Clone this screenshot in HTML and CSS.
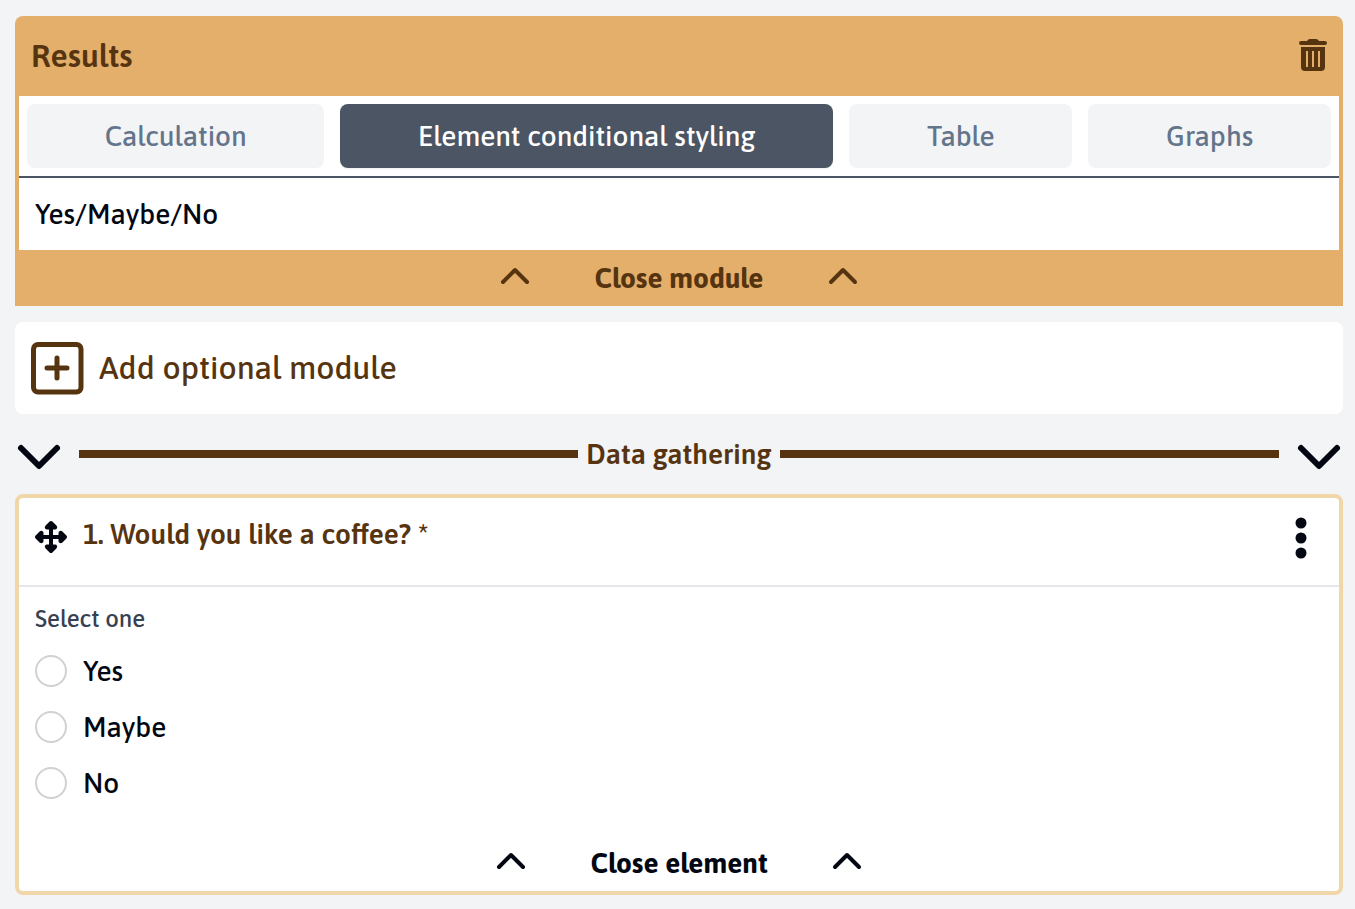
FILE: index.html
```
<!DOCTYPE html>
<html lang="en">
<head>
  <meta charset="UTF-8">
  <title>Survey editor</title>
  <meta name="viewport" content="width=device-width, initial-scale=1.0">
  <link rel="stylesheet" href="styles.css">
</head>
<body>
  <section class="module">
    <header class="module-header">
      <h2>Results</h2>
      <button type="button" class="icon-btn" aria-label="Delete module">
        <svg width="28" height="34" viewBox="0 0 28 34" fill="currentColor">
          <path d="M2 2H8Q9 0 11 0H17Q19 0 20 2H26Q28 2 28 4T26 6H2Q0 6 0 4T2 2Z"/>
          <path fill-rule="evenodd" d="M2 8H26V28Q26 32 22 32H6Q2 32 2 28ZM7 12V28H9V12ZM13 12V28H15V12ZM19 12V28H21V12Z"/>
        </svg>
      </button>
    </header>
    <div class="module-body">
      <nav class="tabs">
        <button type="button" class="tab">Calculation</button>
        <button type="button" class="tab active">Element conditional styling</button>
        <button type="button" class="tab">Table</button>
        <button type="button" class="tab">Graphs</button>
      </nav>
      <p class="module-row">Yes/Maybe/No</p>
    </div>
    <button type="button" class="close-btn">
      <svg width="32" height="32" viewBox="0 0 32 32"><path class="stroke" d="M4 20 16 8 28 20"/></svg>
      <span>Close module</span>
      <svg width="32" height="32" viewBox="0 0 32 32"><path class="stroke" d="M4 20 16 8 28 20"/></svg>
    </button>
  </section>

  <button type="button" class="add-module">
    <svg width="52" height="52" viewBox="0 0 52 52">
      <rect class="box" x="2.500" y="2.500" width="47.500" height="47.500" rx="4.500"/>
      <path class="plus" d="M16 26H36M26 16V36"/>
    </svg>
    <span>Add optional module</span>
  </button>

  <div class="divider">
    <button type="button" class="icon-btn" aria-label="Collapse section">
      <svg width="48" height="48" viewBox="0 0 48 48"><path class="stroke" d="M6 18 24 36 42 18"/></svg>
    </button>
    <div class="divider-title">
      <h3>Data gathering</h3>
    </div>
    <button type="button" class="icon-btn" aria-label="Collapse section">
      <svg width="48" height="48" viewBox="0 0 48 48"><path class="stroke" d="M6 18 24 36 42 18"/></svg>
    </button>
  </div>

  <section class="element">
    <header class="element-header">
      <button type="button" class="icon-btn drag-handle" aria-label="Move element">
        <svg width="32" height="32" viewBox="0 0 32 32" fill="currentColor">
          <path d="M14.600 .6Q16-.6 17.400 .6L21.400 4.600Q22.600 6 22 7.200Q21.400 8.500 20 8.500H18V14H23.500V12Q23.500 10.600 24.800 10Q26.200 9.500 27.400 10.600L31.400 14.600Q32.600 16 31.400 17.400L27.400 21.400Q26.200 22.500 24.800 22Q23.500 21.400 23.500 20V18H18V23.500H20Q21.400 23.500 22 24.800Q22.600 26 21.400 27.400L17.400 31.400Q16 32.600 14.600 31.400L10.600 27.400Q9.400 26 10 24.800Q10.600 23.500 12 23.500H14V18H8.500V20Q8.500 21.400 7.200 22Q5.800 22.500 4.600 21.400L.6 17.400Q-.6 16 .6 14.600L4.600 10.600Q5.800 9.500 7.200 10Q8.500 10.600 8.500 12V14H14V8.500H12Q10.600 8.500 10 7.200Q9.400 6 10.600 4.600Z"/>
        </svg>
      </button>
      <h3>1. Would you like a coffee? *</h3>
      <button type="button" class="icon-btn" aria-label="Element options">
        <svg width="44" height="44" viewBox="0 0 44 44" fill="currentColor">
          <circle cx="22" cy="7" r="5.500"/>
          <circle cx="22" cy="22" r="5.500"/>
          <circle cx="22" cy="37" r="5.500"/>
        </svg>
      </button>
    </header>
    <fieldset class="options">
      <legend>Select one</legend>
      <label class="option"><input type="radio" name="coffee" value="yes">Yes</label>
      <label class="option"><input type="radio" name="coffee" value="maybe">Maybe</label>
      <label class="option"><input type="radio" name="coffee" value="no">No</label>
    </fieldset>
    <button type="button" class="close-btn">
      <svg width="32" height="32" viewBox="0 0 32 32"><path class="stroke" d="M4 20 16 8 28 20"/></svg>
      <span>Close element</span>
      <svg width="32" height="32" viewBox="0 0 32 32"><path class="stroke" d="M4 20 16 8 28 20"/></svg>
    </button>
  </section>
</body>
</html>
```
FILE: styles.css
```
* {
  box-sizing: border-box;
}
body {
  margin: 0;
  padding: 16px 12px 14px 15px;
  font-family: Asap, Roboto, sans-serif;
  font-size: 28px;
  font-weight: 500;
  line-height: 40px;
  background: #f3f4f6;
  color: #030712;
}
h2, h3, p {
  margin: 0;
}
button {
  font: inherit;
  color: inherit;
  background: none;
  border: none;
  padding: 0;
  cursor: pointer;
}
svg {
  display: block;
}
.icon-btn {
  flex: none;
}
.stroke {
  fill: none;
  stroke: currentColor;
  stroke-width: 4;
  stroke-linecap: round;
  stroke-linejoin: round;
}
/* Results module */
.module {
  background: #e3af6b;
  color: #573410;
  border-radius: 8px 8px 0 0;
}
.module-header {
  display: flex;
  justify-content: space-between;
  align-items: center;
  height: 80px;
  padding: 0 16px;
}
.module-header h2 {
  font-size: 32px;
  font-weight: 600;
}
.module-body {
  margin: 0 4px;
  background: #fff;
  color: #030712;
}
.tabs {
  display: flex;
  gap: 16px;
  padding: 8px;
  border-bottom: 2px solid #4b5563;
}
.tab {
  flex: 1 1 auto;
  height: 64px;
  border-radius: 8px;
  background: #f3f4f6;
  color: #64748b;
}
.tab.active {
  background: #4b5563;
  color: #fff;
  box-shadow: 0 1px 2px #0001;
}
.module-row {
  padding: 16px;
}
.close-btn {
  display: flex;
  justify-content: center;
  align-items: center;
  gap: 64px;
  width: 100%;
  height: 56px;
  font-weight: 700;
}
/* Add module */
.add-module {
  display: flex;
  align-items: center;
  gap: 16px;
  width: 100%;
  margin-top: 16px;
  padding: 20px 16px;
  border-radius: 8px;
  background: #fff;
  color: #573410;
  font-size: 32px;
}
.add-module svg {
  overflow: visible;
}
.add-module .box, .add-module .plus {
  fill: none;
  stroke: currentColor;
  stroke-width: 5;
  stroke-linecap: round;
}
/* Section divider */
.divider {
  display: flex;
  align-items: center;
  gap: 16px;
  height: 80px;
}
.divider .stroke {
  stroke-width: 6;
}
.divider-title {
  flex: 1;
  display: flex;
  align-items: center;
  gap: 8px;
  color: #573410;
}
.divider-title::before, .divider-title::after {
  content: "";
  flex: 1;
  height: 8px;
  background: #573410;
}
.divider-title h3 {
  font-size: 28px;
  font-weight: 600;
}
/* Question element */
.element {
  border: 4px solid #f1d6a9;
  border-radius: 8px;
  background: #fff;
}
.element-header {
  display: flex;
  align-items: flex-start;
  gap: 16px;
  padding: 16px 16px 25px;
  border-bottom: 2px solid #e5e7eb;
}
.element-header .icon-btn {
  padding-top: 2px;
}
.element-header .drag-handle {
  padding-top: 7px;
}
.element-header h3 {
  flex: 1;
  color: #573410;
  font-size: 28px;
  font-weight: 600;
}
.options {
  margin: 0;
  padding: 12px 16px 24px;
  border: none;
}
.options legend {
  float: left;
  width: 100%;
  margin-bottom: 4px;
  padding: 0;
  font-size: 24px;
  color: #374151;
}
.option {
  display: flex;
  align-items: center;
  gap: 16px;
  clear: both;
  height: 56px;
}
.option input {
  appearance: none;
  width: 32px;
  height: 32px;
  margin: 0;
  border: 2px solid #d1d1d1;
  border-radius: 50%;
  background: #fff;
}
.option input:checked {
  border: 10px solid #573410;
}
```
